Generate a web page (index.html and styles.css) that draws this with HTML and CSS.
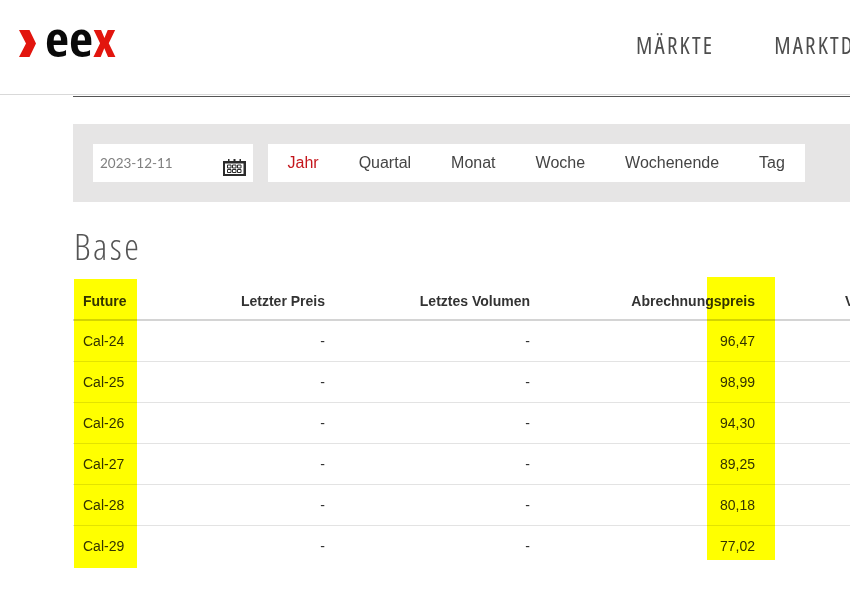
FILE: index.html
```html
<!DOCTYPE html>
<html lang="de">
<head>
<meta charset="utf-8">
<title>EEX Marktdaten</title>
<link rel="stylesheet" href="styles.css">
</head>
<body>
<header class="site-header">
  <a class="logo" href="#" aria-label="eex">
    <svg width="100" height="32" viewBox="0 0 100 32">
      <polygon fill="#e2150e" points="0,3 10.500,3 17,16.500 10.500,30 0,30 7,16.500"/>
      <text class="logo-text" x="26" y="29.500" textLength="71" lengthAdjust="spacingAndGlyphs"><tspan fill="#0a0a0a">ee</tspan><tspan fill="#e2150e">x</tspan></text>
    </svg>
  </a>
  <nav class="main-nav">
    <a href="#">MÄRKTE</a>
    <a href="#">MARKTDATEN</a>
  </nav>
</header>
<main class="content">
  <div class="rule"></div>
  <section class="filter-bar">
    <div class="date-field">
      <span class="date-value">2023-12-11</span>
      <svg class="cal-icon" width="23" height="19" viewBox="0 0 23 19">
        <path fill="#2b2b2b" fill-rule="evenodd" d="M0 2h5V0h1.500v2h4V0h2v2h4V0h1.500v2h5v15H0zM2 4.500v10.500h18.500V4.500z"/>
        <path fill="none" stroke="#2b2b2b" d="M4.500 6h3.500v3h-3.500zM9.500 6h3.500v3h-3.500zM14.500 6h3.500v3h-3.500zM4.500 10.500h3.500v3h-3.500zM9.500 10.500h3.500v3h-3.500zM14.500 10.500h3.500v3h-3.500z"/>
      </svg>
    </div>
    <ul class="period-tabs">
      <li class="active">Jahr</li>
      <li>Quartal</li>
      <li>Monat</li>
      <li>Woche</li>
      <li>Wochenende</li>
      <li>Tag</li>
    </ul>
  </section>
  <h1 class="section-title">Base</h1>
  <div class="table-wrap">
    <table class="price-table">
      <colgroup>
        <col class="c1"><col class="c2"><col class="c3"><col class="c4"><col class="c5">
      </colgroup>
      <thead>
        <tr><th>Future</th><th>Letzter Preis</th><th>Letztes Volumen</th><th>Abrechnungspreis</th><th>Volumen</th></tr>
      </thead>
      <tbody>
        <tr><td>Cal-24</td><td>-</td><td>-</td><td>96,47</td><td>-</td></tr>
        <tr><td>Cal-25</td><td>-</td><td>-</td><td>98,99</td><td>-</td></tr>
        <tr><td>Cal-26</td><td>-</td><td>-</td><td>94,30</td><td>-</td></tr>
        <tr><td>Cal-27</td><td>-</td><td>-</td><td>89,25</td><td>-</td></tr>
        <tr><td>Cal-28</td><td>-</td><td>-</td><td>80,18</td><td>-</td></tr>
        <tr><td>Cal-29</td><td>-</td><td>-</td><td>77,02</td><td>-</td></tr>
      </tbody>
    </table>
    <div class="marker marker-future"></div>
    <div class="marker marker-price"></div>
  </div>
</main>
</body>
</html>
```

FILE: styles.css
```css
html, body {
  margin: 0;
  padding: 0;
  background: #fff;
}
body {
  width: 850px;
  height: 592px;
  overflow: hidden;
  font-family: "Liberation Sans", Arial, sans-serif;
  color: #333;
}
.site-header {
  height: 95px;
  box-sizing: border-box;
  border-bottom: 1px solid #d9d9d9;
  display: flex;
  align-items: flex-start;
  white-space: nowrap;
}
.logo {
  display: block;
  margin: 27px 0 0 19px;
  width: 100px;
  height: 32px;
  flex: none;
}
.logo-text {
  font-family: "Open Sans", sans-serif;
  font-stretch: 75%;
  font-weight: 700;
  font-size: 49px;
}
.main-nav {
  display: flex;
  gap: 60px;
  margin: 32px 0 0 517px;
}
.main-nav a {
  font-family: "Open Sans", sans-serif;
  font-stretch: 75%;
  font-size: 23px;
  line-height: 26px;
  letter-spacing: 2.200px;
  color: #4e4e4e;
  text-decoration: none;
}
.content {
  padding: 1px 0 0 73px;
}
.rule {
  height: 0;
  border-top: 1px solid #555;
  margin-bottom: 27px;
}
.filter-bar {
  height: 78px;
  box-sizing: border-box;
  padding: 20px;
  background: #e6e5e5;
  display: flex;
  gap: 15px;
  align-items: stretch;
}
.date-field {
  width: 160px;
  flex: none;
  background: #fff;
  position: relative;
  display: flex;
  align-items: center;
  padding-left: 7px;
  box-sizing: border-box;
}
.date-value {
  font-family: "Lato", sans-serif;
  font-size: 13.500px;
  color: #808080;
}
.cal-icon {
  position: absolute;
  left: 130px;
  top: 15px;
}
.period-tabs {
  list-style: none;
  margin: 0;
  padding: 0;
  background: #fff;
  display: flex;
  align-items: center;
  font-size: 16px;
  color: #444;
}
.period-tabs li {
  padding: 0 20px;
}
.period-tabs li:first-child {
  padding-left: 19.500px;
}
.period-tabs li:last-child {
  padding-right: 20.500px;
}
.period-tabs .active {
  color: #c4161c;
}
.section-title {
  margin: 24px 0 0;
  padding-left: 1px;
  height: 53px;
  font-family: "Open Sans", sans-serif;
  font-stretch: 75%;
  font-weight: 300;
  font-size: 37px;
  line-height: 40px;
  letter-spacing: 2.500px;
  color: #555;
}
.table-wrap {
  position: relative;
  width: 840px;
}
.price-table {
  table-layout: fixed;
  border-collapse: collapse;
  width: 840px;
  font-size: 14px;
}
.c1 { width: 122px; }
.c2 { width: 140px; }
.c3 { width: 205px; }
.c4 { width: 225px; }
.c5 { width: 148px; }
.price-table th,
.price-table td {
  padding: 0 10px;
  text-align: right;
  height: 40px;
  box-sizing: content-box;
}
.price-table th:first-child,
.price-table td:first-child {
  text-align: left;
}
.price-table th {
  font-weight: 700;
  color: #333;
  height: 36px;
  padding-top: 4px;
  border-bottom: 2px solid #d4d4d4;
}
.price-table td {
  border-bottom: 1px solid #e3e3e3;
}
.price-table tbody tr:last-child td {
  border-bottom: 0;
}
.marker {
  position: absolute;
  background: #ff0;
  mix-blend-mode: multiply;
}
.marker-future {
  left: 1px;
  top: 0;
  width: 63px;
  height: 289px;
}
.marker-price {
  left: 634px;
  top: -2px;
  width: 68px;
  height: 283px;
}
```
